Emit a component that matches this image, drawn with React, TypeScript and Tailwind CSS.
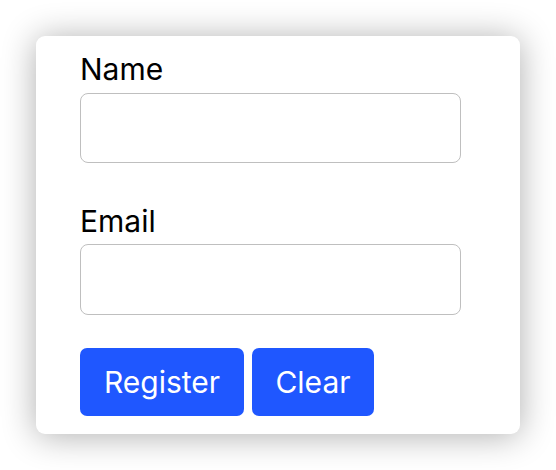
export default function App() {
  return (
    <div className="h-[470px] w-[556px] bg-white pt-9 pl-9" style={{ fontFamily: 'Inter, "Liberation Sans", sans-serif' }}>
      <div className="h-[398px] w-[484px] rounded-[9px] bg-white pl-[44px] pt-[14px] shadow-[0_2px_34px_rgba(0,0,0,0.32)]">
        <form className="flex flex-col">
          <label className="text-[30px] leading-[38px] text-black">Name</label>
          <input className="mt-[5px] h-[70px] w-[381px] rounded-[8px] border border-[#bfbfbf] outline-none" />
          <label className="mt-[39px] text-[30px] leading-[38px] text-black">Email</label>
          <input className="mt-[4px] h-[71px] w-[381px] rounded-[8px] border border-[#bfbfbf] outline-none" />
          <div className="mt-[33px] flex gap-2">
            <button type="button" className="h-[68px] w-[164px] rounded-[7px] bg-[#1f57ff] text-[30px] text-white">Register</button>
            <button type="button" className="h-[68px] w-[122px] rounded-[7px] bg-[#1f57ff] text-[30px] text-white">Clear</button>
          </div>
        </form>
      </div>
    </div>
  );
}
